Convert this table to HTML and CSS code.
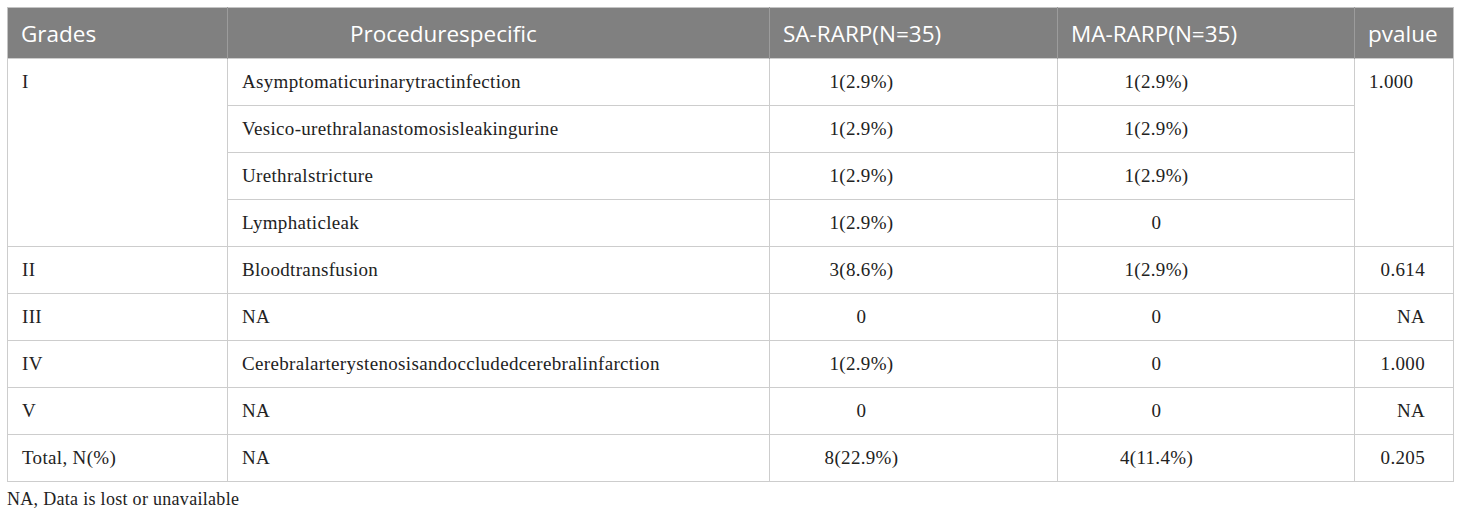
FILE: index.html
```html
<!DOCTYPE html>
<html lang="en">
<head>
    <meta charset="UTF-8">
    <title>Procedure specific complications</title>
    <link rel="stylesheet" href="styles.css">
</head>
<body>

<div class="wrap">
    <table class="grades-table">
        <colgroup>
            <col class="c-grade">
            <col class="c-proc">
            <col class="c-sa">
            <col class="c-ma">
            <col class="c-p">
        </colgroup>
        <thead>
            <tr>
                <th>Grades</th>
                <th class="proc-head">Procedurespecific</th>
                <th>SA-RARP(N=35)</th>
                <th>MA-RARP(N=35)</th>
                <th>pvalue</th>
            </tr>
        </thead>
        <tbody>
            <tr>
                <td rowspan="4" class="top">I</td>
                <td>Asymptomaticurinarytractinfection</td>
                <td class="sa">1(2.9%)</td>
                <td class="ma">1(2.9%)</td>
                <td rowspan="4" class="top">1.000</td>
            </tr>
            <tr>
                <td>Vesico-urethralanastomosisleakingurine</td>
                <td class="sa">1(2.9%)</td>
                <td class="ma">1(2.9%)</td>
            </tr>
            <tr>
                <td>Urethralstricture</td>
                <td class="sa">1(2.9%)</td>
                <td class="ma">1(2.9%)</td>
            </tr>
            <tr>
                <td>Lymphaticleak</td>
                <td class="sa">1(2.9%)</td>
                <td class="ma">0</td>
            </tr>
            <tr>
                <td>II</td>
                <td>Bloodtransfusion</td>
                <td class="sa">3(8.6%)</td>
                <td class="ma">1(2.9%)</td>
                <td class="pv">0.614</td>
            </tr>
            <tr>
                <td>III</td>
                <td>NA</td>
                <td class="sa">0</td>
                <td class="ma">0</td>
                <td class="pv">NA</td>
            </tr>
            <tr>
                <td>IV</td>
                <td>Cerebralarterystenosisandoccludedcerebralinfarction</td>
                <td class="sa">1(2.9%)</td>
                <td class="ma">0</td>
                <td class="pv">1.000</td>
            </tr>
            <tr>
                <td>V</td>
                <td>NA</td>
                <td class="sa">0</td>
                <td class="ma">0</td>
                <td class="pv">NA</td>
            </tr>
            <tr>
                <td>Total, N(%)</td>
                <td>NA</td>
                <td class="sa">8(22.9%)</td>
                <td class="ma">4(11.4%)</td>
                <td class="pv">0.205</td>
            </tr>
        </tbody>
    </table>
    <p class="note">NA, Data is lost or unavailable</p>
</div>

</body>
</html>
```

FILE: styles.css
```css
body {
    margin: 0;
    background-color: #fff;
    font-family: "Liberation Serif", "Times New Roman", serif;
    color: #222;
}

.wrap {
    padding: 7px 0 0 7px;
}

.grades-table {
    border-collapse: collapse;
    table-layout: fixed;
    width: 1446px;
    border: 1px solid #c4c4c4;
}

.c-grade { width: 220px; }
.c-proc { width: 542px; }
.c-sa { width: 288px; }
.c-ma { width: 297px; }
.c-p { width: 99px; }

.grades-table th {
    background-color: #808080;
    color: #fff;
    font-family: "Open Sans", sans-serif;
    font-weight: normal;
    font-size: 22.5px;
    text-align: left;
    height: 50px;
    padding: 0 13px;
    border-left: 1px solid #9c9c9c;
    white-space: nowrap;
}

.grades-table th:first-child {
    border-left: none;
}

.grades-table th.proc-head {
    padding-left: 122px;
}

.grades-table td {
    font-size: 19px;
    letter-spacing: 0.33px;
    height: 46px;
    padding: 0 14px;
    border: 1px solid #cdcdcd;
    vertical-align: middle;
    white-space: nowrap;
}

.grades-table td.top {
    vertical-align: top;
    padding-top: 12px;
}

.grades-table td.sa {
    text-align: center;
    padding: 0 104px 0 0;
}

.grades-table td.ma {
    text-align: center;
    padding: 0 99px 0 0;
}

.grades-table td.pv {
    text-align: right;
    padding-right: 28px;
}

.note {
    margin: 7px 0 0 0;
    font-size: 18px;
    letter-spacing: 0.3px;
}
```
